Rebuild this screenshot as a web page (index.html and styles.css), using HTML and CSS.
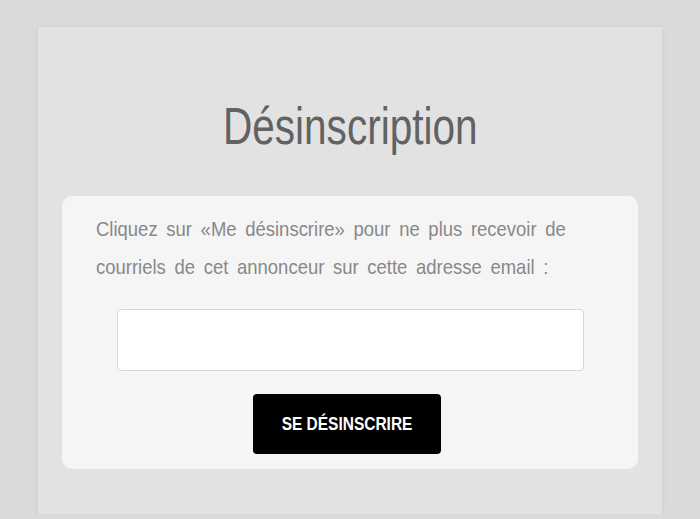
FILE: index.html
```html
<!DOCTYPE html>
<html lang="fr">
<head>
    <meta charset="UTF-8">
    <meta name="viewport" content="width=device-width, initial-scale=1.0">
    <title>Désinscription</title>
    <link rel="stylesheet" href="styles.css">
</head>
<body>
    <div class="page">
        <h1 class="title"><span>Désinscription</span></h1>
        <form class="card" id="unsubscribeForm">
            <p class="intro"><span>Cliquez sur «Me désinscrire» pour ne plus recevoir de<br>courriels de cet annonceur sur cette adresse email :</span></p>
            <input type="email" class="email" id="email">
            <button type="button" class="btn"><span>SE DÉSINSCRIRE</span></button>
        </form>
    </div>
</body>
</html>
```

FILE: styles.css
```css
body {
    margin: 0;
    padding: 0;
    background-color: #dadada;
    font-family: "Liberation Sans", Arial, sans-serif;
}

.page {
    margin: 27px 38px 0;
    height: 487px;
    padding-top: 69px;
    box-sizing: border-box;
    background-color: #e2e2e2;
    box-shadow: 0 0 6px rgba(0, 0, 0, 0.06);
}

.title {
    margin: 0;
    text-align: center;
    font-size: 52px;
    line-height: 60px;
    font-weight: normal;
    color: #626262;
}

.title span {
    display: inline-block;
    transform: scaleX(0.78);
}

.card {
    margin: 40px 24px 0;
    height: 273px;
    padding: 14px 34px 0;
    box-sizing: border-box;
    background-color: #f5f5f5;
    border-radius: 10px;
    display: flex;
    flex-direction: column;
    align-items: center;
}

.intro {
    margin: 0;
    align-self: stretch;
    font-size: 21px;
    line-height: 38px;
    color: #888;
    white-space: nowrap;
}

.intro span {
    display: inline-block;
    transform: scaleX(0.88);
    transform-origin: left center;
    word-spacing: 4px;
}

.email {
    margin-top: 23px;
    width: 467px;
    height: 62px;
    box-sizing: border-box;
    border: 1px solid #d8d8d8;
    border-radius: 4px;
    background-color: #fff;
}

.btn {
    margin-top: 23px;
    margin-right: 6px;
    width: 188px;
    height: 60px;
    border: none;
    border-radius: 4px;
    background-color: #000;
    color: #fff;
    font-family: "Liberation Sans", Arial, sans-serif;
    font-size: 18px;
    font-weight: bold;
    cursor: pointer;
}

.btn span {
    display: inline-block;
    transform: scaleX(0.86);
}
```
